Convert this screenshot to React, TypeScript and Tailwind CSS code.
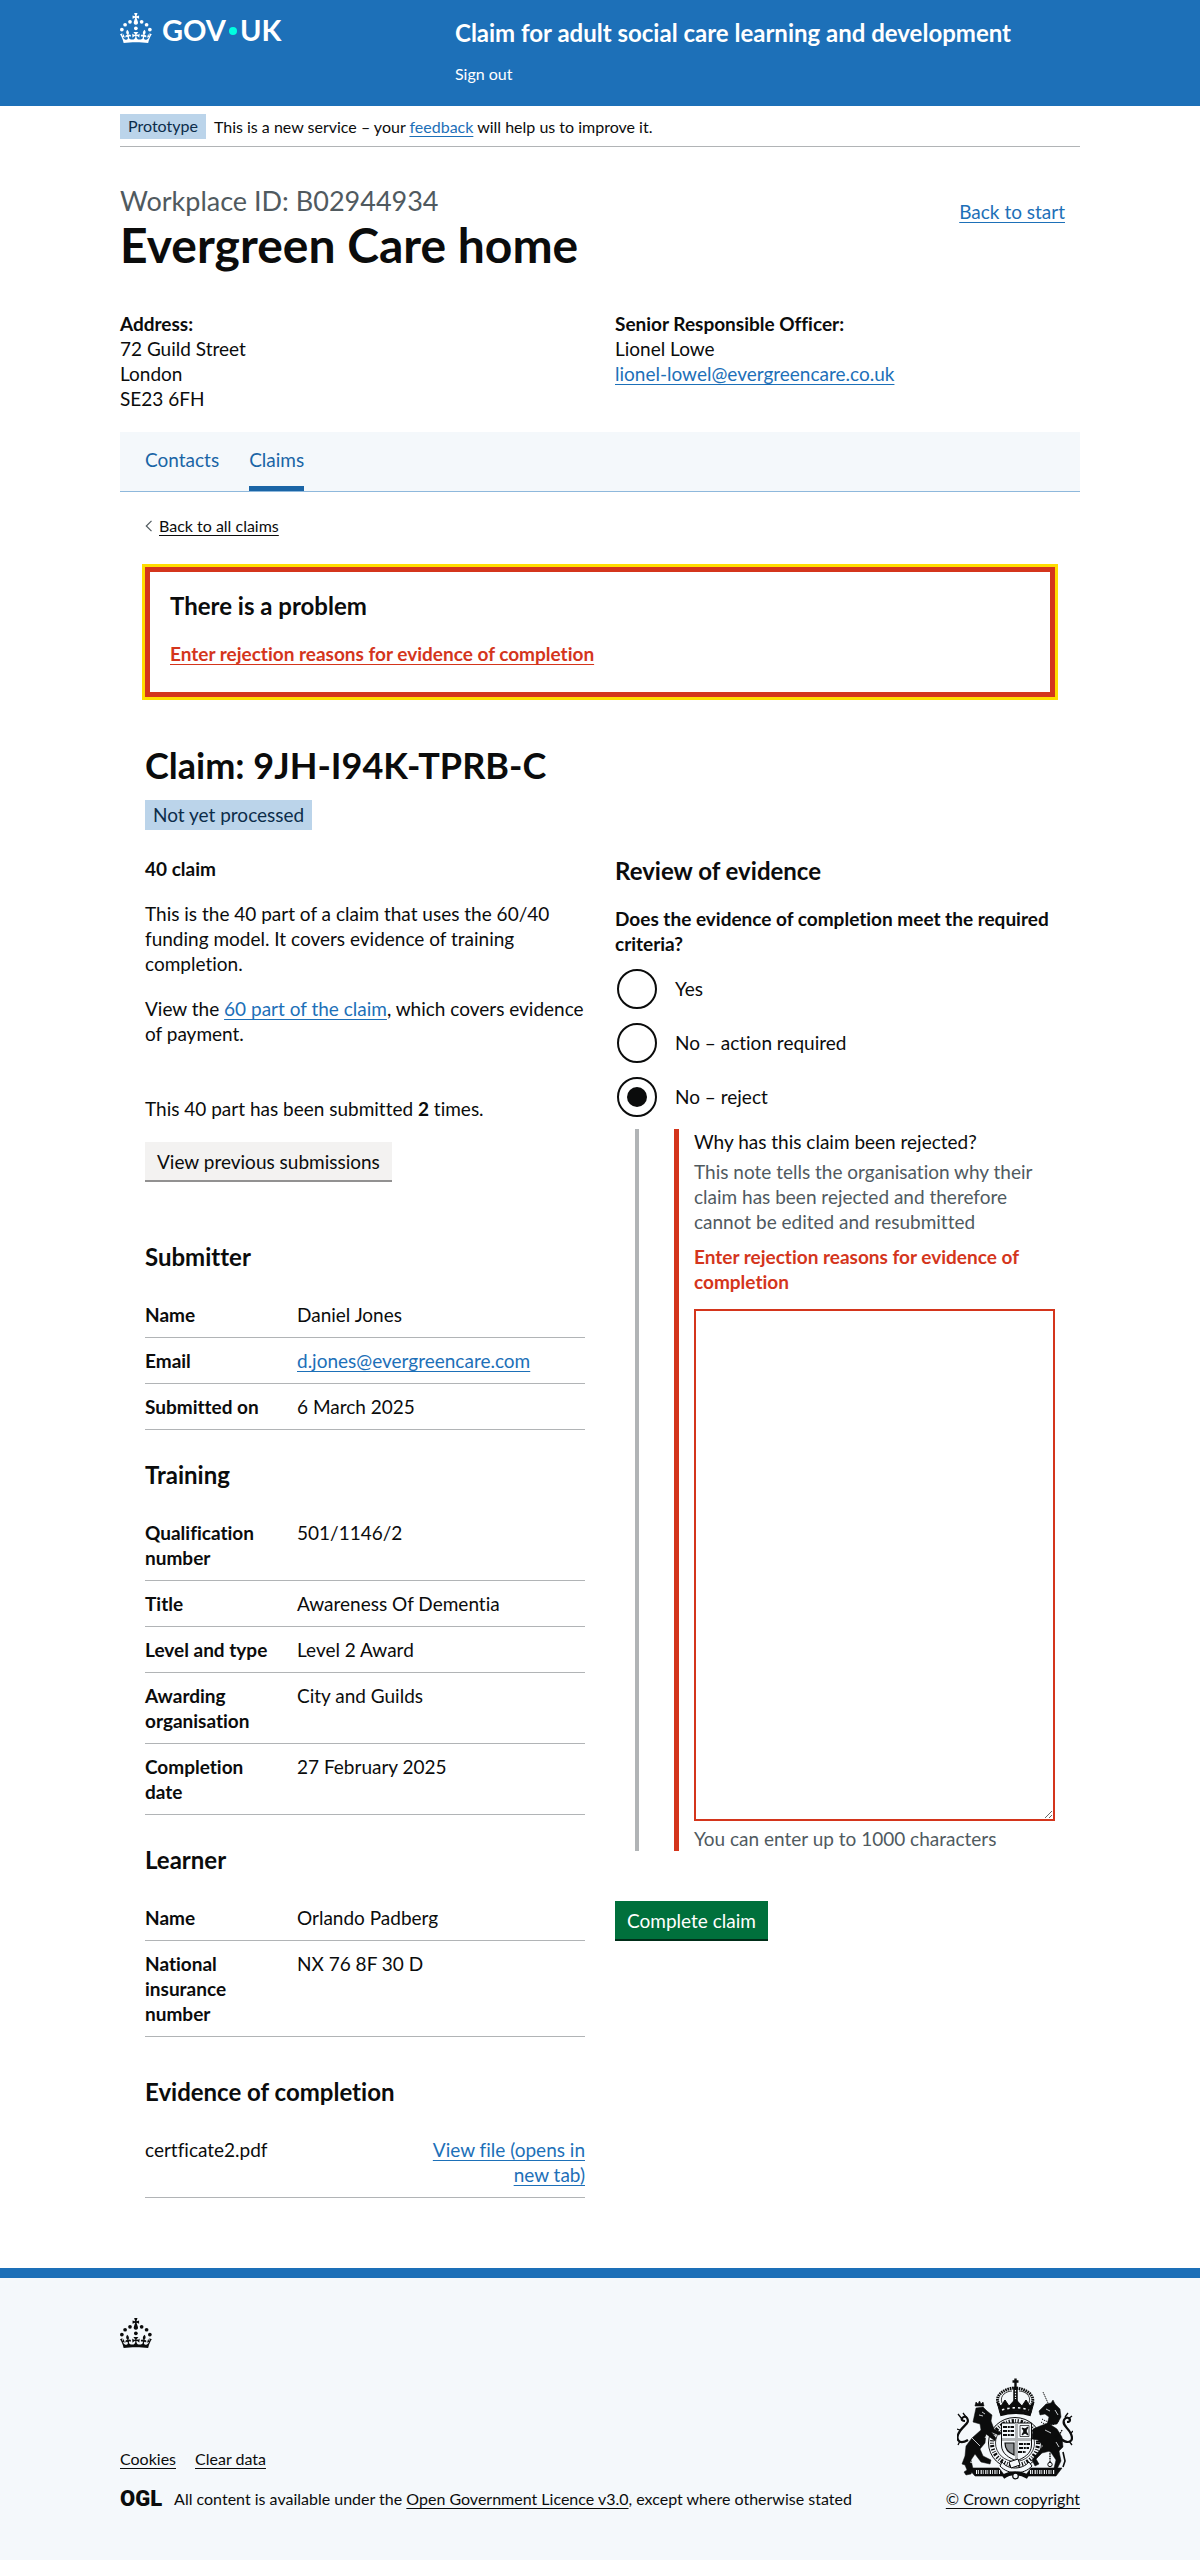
import { useState, type ReactNode } from "react";

const LINK =
  "text-[#1d70b8] underline decoration-1 underline-offset-[3px] hover:decoration-3";
const PLAIN_LINK =
  "text-[#0b0c0c] underline decoration-1 underline-offset-[3px] hover:decoration-3";

function Crown({ className }: { className?: string }) {
  return (
    <svg viewBox="0 0 64 60" className={className} fill="currentColor" aria-hidden="true">
      <circle cx="20" cy="17.6" r="3.7" />
      <circle cx="10.2" cy="23.5" r="3.7" />
      <circle cx="3.7" cy="33.2" r="3.7" />
      <circle cx="31.7" cy="30.6" r="3.7" />
      <circle cx="43.3" cy="17.6" r="3.7" />
      <circle cx="53.2" cy="23.5" r="3.7" />
      <circle cx="59.7" cy="33.2" r="3.7" />
      <path d="M33.1,9.8c.2-.1.3-.3.5-.5l4.6,2.4v-6.8l-4.6,1.5c-.1-.2-.3-.3-.5-.5l1.9-5.9h-6.7l1.9,5.9c-.2.1-.3.3-.5.5l-4.6-1.5v6.8l4.6-2.4c.1.2.3.3.5.5l-2.6,8c-.9,2.8,1.2,5.7,4.1,5.7h0c3,0,5.1-2.9,4.1-5.7l-2.6-8ZM37,37.9s-3.4,3.8-4.1,6.1c2.2,0,4.2-.5,6.4-2.8l-.7,8.5c-2-2.8-4.4-4.1-5.7-3.8.1,3.1.5,6.7,5.8,7.2,3.7.3,6.7-1.5,7-3.8.4-2.6-2-4.3-3.7-1.6-1.4-4.5,2.4-6.1,4.9-3.2-1.9-4.5-1.8-7.7,2.4-10.9,3,4,2.6,7.3-1.2,11.1,2.4-1.3,6.2,0,4,4.6-1.2-2.8-3.7-2.2-4.2.2-.3,1.7.7,3.7,3,4.2,1.9.3,4.7-.9,7-5.9-1.3,0-2.4.7-3.9,1.7l2.4-8c.6,2.3,1.4,3.7,2.2,4.5.6-1.6.5-2.8,0-5.3l5,1.8c-2.6,3.6-5.2,8.7-7.3,17.5-7.4-1.1-15.7-1.7-24.5-1.7h0c-8.8,0-17.1.6-24.5,1.7-2.1-8.9-4.7-13.9-7.3-17.5l5-1.8c-.5,2.5-.6,3.7,0,5.3.8-.8,1.6-2.3,2.2-4.5l2.4,8c-1.5-1-2.6-1.7-3.9-1.7,2.3,5,5.2,6.2,7,5.9,2.3-.4,3.3-2.4,3-4.2-.5-2.4-3-3.1-4.2-.2-2.2-4.6,1.6-6,4-4.6-3.7-3.7-4.2-7.1-1.2-11.1,4.2,3.2,4.3,6.4,2.4,10.9,2.5-2.8,6.3-1.3,4.9,3.2-1.8-2.7-4.1-1-3.7,1.6.3,2.3,3.3,4.1,7,3.8,5.4-.5,5.7-4.2,5.8-7.2-1.3-.2-3.7,1-5.7,3.8l-.7-8.5c2.2,2.3,4.2,2.7,6.4,2.8-.7-2.3-4.1-6.1-4.1-6.1h10.6,0Z" />
    </svg>
  );
}

/* Royal coat of arms: crown, garter and shield between the lion and the unicorn. */
function CoatOfArms({ className }: { className?: string }) {
  return (
    <svg viewBox="0 0 116 102" className={className} fill="none" stroke="#0b0c0c" aria-hidden="true">
      {/* crown */}
      <g>
        <path d="M58.5 0.5v9M55.5 3.5h6" strokeWidth="2.4" />
        <path d="M42 27C36 16 50 10 58 10s22 6 16.500 17" strokeWidth="3" strokeDasharray="1.600 .7" />
        <path d="M45 25c-3-8 5-12 10-12M72 25c3-8-5-12-10-12" strokeWidth=".8" />
        <path d="M58.500 9v17" strokeWidth="4.500" />
        <path d="M58.500 12v10" stroke="#f4f8fb" strokeWidth="1.200" strokeDasharray="1.500 1.200" />
        <path d="M40 24l4 4 4-6 4 6 6.500-7 6.500 7 4-6 4 6 4-4-3 11c-10-3-21-3-31 0z" fill="#0b0c0c" />
        <path d="M43 36.500c10-3 21-3 31 0" strokeWidth="3.400" />
        <path d="M45 32c9-3 18-3 27 0" stroke="#f4f8fb" strokeWidth="1.600" strokeDasharray="2.400 3" />
      </g>
      {/* garter */}
      <ellipse cx="58" cy="65" rx="26.500" ry="25.500" fill="#f4f8fb" strokeWidth="1" />
      <ellipse cx="58" cy="65" rx="23" ry="22" strokeWidth="4" strokeDasharray="1.200 1.800 2.200 1.400 .8 1.600" />
      <ellipse cx="58" cy="65" rx="19.500" ry="18.500" strokeWidth=".8" />
      {/* shield */}
      <path d="M44.500 45h30v22c0 9-8 13-15 16-7-3-15-7-15-16z" fill="#f4f8fb" strokeWidth="1" />
      <path d="M46 49h11M46 53h11M46 57h11M62 66h11M62 70h10M61 74h8" strokeWidth="2.200" strokeDasharray="4 .8 2 .7" />
      <path d="M63 47.500h9v11h-9z" strokeWidth=".7" />
      <path d="M65 57l2-4-2-3 3 1 3-2-2 4 2 4-3-2z" fill="#0b0c0c" strokeWidth="1" />
      <path d="M48 65h9v12c-5-2-9-5-9-12z" fill="#8d9194" strokeWidth="1.200" />
      <path d="M59.500 45v37M45 61.500h29" stroke="#b1b4b6" strokeWidth="3" />
      {/* lion */}
      <g fill="#0b0c0c">
        <path d="M18 28l1-4 2 2 1.500-3 1.500 3 2-2 1 4z" strokeWidth=".6" />
        <path d="M19 30l7-1 4 4 5 4-1 6 3 8 8 4-3 2-8-3 5 6-1 3-9-7-1 9-5 6 3 7 8 4-1 4-9-2-6-8-4 6 2 9-2 5-5 1-2-3 3-2-2-5-3-1 3-8 1-10 6-8 9-8-1-6-7-2z" strokeWidth=".5" />
        <path d="M11 62C1 68-2 60 3 53s10-8 7-13c-2-3-6 0-5 2 1 1 3 1 3 1" fill="none" strokeWidth="2.200" />
        <path d="M5 41l-4-5M9 39l-3-4M3 52l-3-1M3 63l-2 4" fill="none" strokeWidth="1.300" />
        <path d="M25 34l3 2M22 37l4 1M15 60l8 8M30 57l-2 3M13 84l4 1" stroke="#f4f8fb" strokeWidth=".8" />
      </g>
      {/* unicorn */}
      <g fill="#0b0c0c">
        <path d="M91 25L86 14" strokeWidth=".9" strokeDasharray="1.500 .6" />
        <path d="M82 33l7-7 5-1 2-3 2 4 5 5 1 8-4 7-10 1 2-8-4-3-5 1z" strokeWidth=".5" />
        <path d="M84 44c6 4 14 4 18-1M85 41c6 4 12 4 17 0" stroke="#0b0c0c" fill="none" strokeWidth="1" strokeDasharray="1.200 .9" />
        <path d="M76 51l7-3 8-3 9 6 5 8 1 10-4 4 2 10-4 8-3-1 2-8-6-9-8 2-6 6 3 5-4 2-3-6 7-9 4-5-5-6-6-1z" strokeWidth=".5" />
        <path d="M104 61c8 6 13 2 10-5s-9-8-7-14c2-4 6-2 6 0s-3 2-3 2" fill="none" strokeWidth="2.200" />
        <path d="M111 41l4-3M108 39l3-4M114 55l2-2M112 63l3 4" fill="none" strokeWidth="1.300" />
        <path d="M105 52c-4 8-12 14-12 24v9" fill="none" stroke="#0b0c0c" strokeWidth="1.400" strokeDasharray="1.600 .8" />
        <circle cx="93" cy="86.500" r="2.200" fill="none" strokeWidth="1" />
        <path d="M106 74l2 9-2 6M98 50l-3 4M101 56l-5 4" fill="none" strokeWidth="1.600" />
        <path d="M89 31l4 2M98 32l3 5M88 52l6 3M99 64l3 5" stroke="#f4f8fb" strokeWidth=".8" />
      </g>
      {/* motto ribbon and buckle */}
      <path d="M11 90h31l6 8H18z" fill="#0b0c0c" strokeWidth=".6" />
      <path d="M105 90H74l-6 8h31z" fill="#0b0c0c" strokeWidth=".6" />
      <path d="M19 94h24M73 94h25" stroke="#f4f8fb" strokeWidth="4" strokeDasharray="1.200 1 .8 1.600" />
      <path d="M45 84c6 8 20 8 27 0l3 4c-8 9-24 9-32 0z" fill="#f4f8fb" strokeWidth="1" />
      <path d="M52 84l9-3 2 6-9 3z" fill="#f4f8fb" strokeWidth="1" />
      <path d="M46 99c7-5 17-5 25 0" strokeWidth="4" />
      <circle cx="58.500" cy="98" r="2.800" fill="#f4f8fb" strokeWidth="1.200" />
    </svg>
  );
}

function Details({ title, rows, className }: {
  title: string;
  rows: [string, ReactNode][];
  className: string;
}) {
  return (
    <section className={className}>
      <h3 className="mb-5 text-[24px] leading-[30px] font-bold">{title}</h3>
      <dl>
        {rows.map(([key, value]) => (
          <div key={key} className="flex border-b border-[#b1b4b6] py-[10px]">
            <dt className="w-[152px] shrink-0 pr-5 font-bold">{key}</dt>
            <dd className="min-w-0 flex-1">{value}</dd>
          </div>
        ))}
      </dl>
    </section>
  );
}

const OPTIONS = [
  { id: "yes", label: "Yes" },
  { id: "action", label: "No – action required" },
  { id: "reject", label: "No – reject" },
];

export default function App() {
  const [outcome, setOutcome] = useState("reject");

  return (
    <div className="flex min-h-screen flex-col bg-white font-[Lato,'Liberation_Sans',sans-serif] text-[19px] leading-[25px] text-[#0b0c0c] [font-variant-ligatures:none]">
      <header className="bg-[#1d70b8] px-4 text-white">
        <div className="mx-auto flex max-w-[960px] flex-col pt-[13px] pb-[22px] md:flex-row">
          <div className="md:w-[335px]">
            <a href="#" aria-label="GOV.UK" className="flex h-[30px] w-fit items-center">
              <Crown className="h-[30px] w-8" />
              <span className="ml-[10px] pt-1 text-[29px] leading-[34px] font-bold">GOV</span>
              <span className="mx-[3px] mt-[6px] size-2 rounded-full bg-[#00ffe0]" />
              <span className="pt-1 text-[29px] leading-[34px] font-bold">UK</span>
            </a>
          </div>
          <div className="flex-1 pt-[5px]">
            <a href="#" className="block text-[24px] leading-[30px] font-bold">
              Claim for adult social care learning and development
            </a>
            <nav className="mt-4 text-[16px] leading-5">
              <a href="#">Sign out</a>
            </nav>
          </div>
        </div>
      </header>

      <div className="flex-1 px-4">
        <div className="mx-auto max-w-[960px]">
          <div className="flex items-center gap-2 border-b border-[#b1b4b6] pt-2 pb-[7px] text-[16px] leading-5">
            <strong className="bg-[#bbd4ea] px-2 pt-[2px] pb-[3px] font-normal text-[#0c2d4a]">Prototype</strong>
            <span>
              This is a new service – your <a href="#" className={LINK}>feedback</a> will help us to improve it.
            </span>
          </div>

          <main>
            <div className="flex justify-between pt-[39px]">
              <div>
                <span className="block text-[27px] leading-[30px] text-[#505a5f]">Workplace ID: B02944934</span>
                <h1 className="mt-1 text-[48px] leading-[50px] font-bold">Evergreen Care home</h1>
              </div>
              <a href="#" className={`mt-[13px] mr-[15px] self-start ${LINK}`}>Back to start</a>
            </div>

            <div className="mt-[41px] mb-[21px] grid gap-[30px] md:grid-cols-2">
              <div>
                <strong className="block">Address:</strong>
                <p>72 Guild Street</p>
                <p>London</p>
                <p>SE23 6FH</p>
              </div>
              <div>
                <strong className="block">Senior Responsible Officer:</strong>
                <p>Lionel Lowe</p>
                <a href="#" className={LINK}>lionel-lowel@evergreencare.co.uk</a>
              </div>
            </div>

            <nav className="flex gap-[30px] border-b border-[#8eb8dc] bg-[#f4f8fb] px-[25px] text-[#1a65a6]">
              <a href="#" className="border-b-[5px] border-transparent pt-[15px] pb-[14px]">Contacts</a>
              <a href="#" aria-current="page" className="border-b-[5px] border-[#1a65a6] pt-[15px] pb-[14px]">Claims</a>
            </nav>

            <div className="px-[25px]">
              <a href="#" className="mt-6 flex w-fit items-center gap-[7px] text-[16px] leading-5">
                <svg viewBox="0 0 7 12" className="h-3 w-[7px]" fill="none" stroke="#505a5f" strokeWidth="1.2" aria-hidden="true">
                  <path d="M6.500 .8L1.300 6l5.200 5.200" />
                </svg>
                <span className="underline decoration-1 underline-offset-[3px]">Back to all claims</span>
              </a>

              <div role="alert" className="mt-[31px] border-[5px] border-[#d4351c] px-5 pt-[19px] pb-[26px] outline-3 outline-[#ffdd00]">
                <h2 className="mb-5 text-[24px] leading-[30px] font-bold">There is a problem</h2>
                <a href="#reasons" className="block w-fit font-bold text-[#d4351c] underline decoration-1 underline-offset-[3px]">
                  Enter rejection reasons for evidence of completion
                </a>
              </div>

              <h2 className="mt-12 text-[36px] leading-10 font-bold">Claim: 9JH-I94K-TPRB-C</h2>
              <strong className="mt-[15px] block w-fit bg-[#bbd4ea] px-2 pt-[2px] pb-[3px] font-normal text-[#0c2d4a]">
                Not yet processed
              </strong>

              <div className="mt-[26px] grid gap-[30px] md:grid-cols-2">
                <div>
                  <h3 className="font-bold">40 claim</h3>
                  <p className="mt-5">
                    This is the 40 part of a claim that uses the 60/40 funding model. It covers evidence of training
                    completion.
                  </p>
                  <p className="mt-5">
                    View the <a href="#" className={LINK}>60 part of the claim</a>, which covers evidence of payment.
                  </p>
                  <p className="mt-[50px]">
                    This 40 part has been submitted <strong>2</strong> times.
                  </p>
                  <button type="button" className="mt-[21px] block border-b-2 border-[#929191] bg-[#f3f2f1] px-3 pt-[7px] pb-[6px]">
                    View previous submissions
                  </button>

                  <Details
                    className="mt-[60px]"
                    title="Submitter"
                    rows={[
                      ["Name", "Daniel Jones"],
                      ["Email", <a href="#" className={LINK}>d.jones@evergreencare.com</a>],
                      ["Submitted on", "6 March 2025"],
                    ]}
                  />
                  <Details
                    className="mt-[30px]"
                    title="Training"
                    rows={[
                      ["Qualification number", "501/1146/2"],
                      ["Title", "Awareness Of Dementia"],
                      ["Level and type", "Level 2 Award"],
                      ["Awarding organisation", "City and Guilds"],
                      ["Completion date", "27 February 2025"],
                    ]}
                  />
                  <Details
                    className="mt-[30px]"
                    title="Learner"
                    rows={[
                      ["Name", "Orlando Padberg"],
                      ["National insurance number", "NX 76 8F 30 D"],
                    ]}
                  />

                  <section className="mt-10">
                    <h3 className="mb-5 text-[24px] leading-[30px] font-bold">Evidence of completion</h3>
                    <div className="flex justify-between border-b border-[#b1b4b6] py-[10px]">
                      <span>certficate2.pdf</span>
                      <span className="w-[160px] text-right">
                        <a href="#" className={LINK}>View file (opens in new tab)</a>
                      </span>
                    </div>
                  </section>
                </div>

                <form onSubmit={(e) => e.preventDefault()}>
                  <h3 className="text-[24px] leading-[30px] font-bold">Review of evidence</h3>
                  <fieldset className="mt-5">
                    <legend className="font-bold">
                      Does the evidence of completion meet the required criteria?
                    </legend>
                    <div className="flex flex-col gap-[10px] pt-[11px]">
                      {OPTIONS.map((o) => (
                        <div key={o.id} className="flex h-11 items-center pl-[2px]">
                          <input
                            type="radio"
                            id={o.id}
                            name="outcome"
                            checked={outcome === o.id}
                            onChange={() => setOutcome(o.id)}
                            className="grid size-10 shrink-0 cursor-pointer appearance-none place-content-center rounded-full border-2 border-[#0b0c0c] bg-white before:hidden before:size-5 before:rounded-full before:bg-[#0b0c0c] checked:before:block"
                          />
                          <label htmlFor={o.id} className="cursor-pointer pb-[2px] pl-[18px]">{o.label}</label>
                        </div>
                      ))}
                    </div>
                    {outcome === "reject" && (
                      <div className="mt-[10px] ml-5 border-l-4 border-[#b1b4b6] pl-[35px]">
                        <div className="border-l-[5px] border-[#d4351c] pl-[15px]">
                          <label htmlFor="reasons" className="block">Why has this claim been rejected?</label>
                          <p id="reasons-hint" className="mt-[5px] text-[#505a5f]">
                            This note tells the organisation why their claim has been rejected and therefore cannot be
                            edited and resubmitted
                          </p>
                          <p id="reasons-error" className="mt-[10px] font-bold text-[#d4351c]">
                            Enter rejection reasons for evidence of completion
                          </p>
                          <textarea
                            id="reasons"
                            aria-describedby="reasons-hint reasons-error reasons-count"
                            className="mt-[15px] block h-[512px] w-full resize-y border-2 border-[#d4351c] p-[5px]"
                          />
                          <p id="reasons-count" className="mt-[5px] text-[#505a5f]">
                            You can enter up to 1000 characters
                          </p>
                        </div>
                      </div>
                    )}
                  </fieldset>
                  <button type="submit" className="mt-[50px] block border-b-2 border-[#002d18] bg-[#00703c] px-3 pt-[7px] pb-[6px] text-white">
                    Complete claim
                  </button>
                </form>
              </div>
            </div>
          </main>
        </div>
      </div>

      <footer className="mt-[70px] border-t-10 border-[#1d70b8] bg-[#f4f8fb] px-4 text-[16px] leading-5">
        <div className="mx-auto max-w-[960px] pt-10 pb-[51px]">
          <Crown className="h-[30px] w-8" />
          <div className="mt-[30px] flex flex-wrap items-end justify-between gap-5">
            <div>
              <ul className="flex gap-[19px]">
                <li><a href="#" className={PLAIN_LINK}>Cookies</a></li>
                <li><a href="#" className={PLAIN_LINK}>Clear data</a></li>
              </ul>
              <div className="mt-5 flex items-center gap-3">
                <span className="font-[Roboto,sans-serif] text-[22px] font-black">OGL</span>
                <span>
                  All content is available under the{" "}
                  <a href="#" className={PLAIN_LINK}>Open Government Licence v3.0</a>, except where otherwise stated
                </span>
              </div>
            </div>
            <a href="#" className={`flex flex-col items-end gap-[9px] ${PLAIN_LINK}`}>
              <CoatOfArms className="mr-[7px] h-[102px] w-[116px]" />
              <span>© Crown copyright</span>
            </a>
          </div>
        </div>
      </footer>
    </div>
  );
}
